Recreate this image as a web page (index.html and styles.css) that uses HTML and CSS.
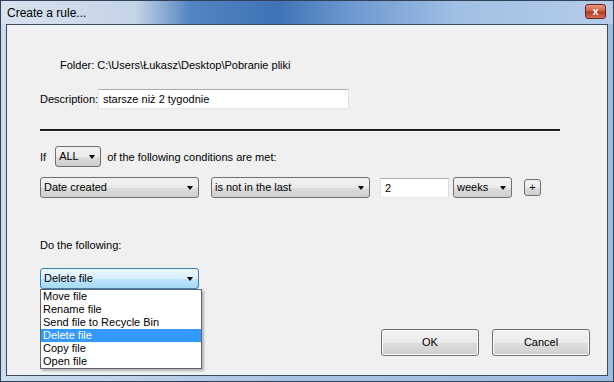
FILE: index.html
```html
<!DOCTYPE html>
<html lang="en">
<head>
  <meta charset="UTF-8">
  <title>Create a rule...</title>
  <link rel="stylesheet" href="styles.css">
</head>
<body>
  <div class="window">
    <div class="titlebar">
      <span class="title">Create a rule...</span>
      <span class="close">x</span>
    </div>

    <div class="client">
      <div class="folder">Folder: C:\Users\Łukasz\Desktop\Pobranie pliki</div>

      <div class="row desc-row">
        <span class="label">Description:</span>
        <div class="textbox desc-box">starsze niż 2 tygodnie</div>
      </div>

      <div class="rule"></div>

      <div class="row if-row">
        <span>If</span>
        <div class="combo combo-all"><span>ALL</span><i class="arrow"></i></div>
        <span>of the following conditions are met:</span>
      </div>

      <div class="row cond-row">
        <div class="combo combo-wide"><span>Date created</span><i class="arrow"></i></div>
        <div class="combo combo-wide second"><span>is not in the last</span><i class="arrow"></i></div>
        <div class="textbox num-box">2</div>
        <div class="combo combo-weeks"><span>weeks</span><i class="arrow"></i></div>
        <div class="plus">+</div>
      </div>

      <div class="do-label">Do the following:</div>

      <div class="action">
        <div class="combo combo-wide focused"><span>Delete file</span><i class="arrow"></i></div>
        <ul class="droplist">
          <li>Move file</li>
          <li>Rename file</li>
          <li>Send file to Recycle Bin</li>
          <li class="selected">Delete file</li>
          <li>Copy file</li>
          <li>Open file</li>
        </ul>
      </div>

      <div class="buttons">
        <div class="btn">OK</div>
        <div class="btn">Cancel</div>
      </div>
    </div>
  </div>
</body>
</html>
```

FILE: styles.css
```css
body {
  margin: 0;
  font-family: 'Liberation Sans', Arial, sans-serif;
  font-size: 11px;
  color: #000;
  background: #a9c4e2;
}

.window {
  width: 614px;
  height: 382px;
  box-sizing: border-box;
  border: 1px solid #2f4259;
  background: linear-gradient(to right, #cddced, #a6c2e2 50%, #9dbde3);
  display: flex;
  flex-direction: column;
}

/* aero title bar with its dark streak */
.titlebar {
  height: 23px;
  padding: 0 5px;
  display: flex;
  align-items: center;
  justify-content: space-between;
  flex-shrink: 0;
  background: linear-gradient(to right, #d8e3ee 0%, #c3d4e7 22%, #5384c2 31%, #3f73b6 45%, #6f9bd1 58%, #a2c0e4 75%, #b5cdea 100%);
}

.title {
  font-size: 12px;
  padding-left: 1px;
}

.close {
  width: 21px;
  height: 15px;
  margin-right: 2px;
  margin-top: -2px;
  border: 1px solid #6e2418;
  border-radius: 3px;
  background: linear-gradient(#e59a85, #d0604a 45%, #b8371f 55%, #d3705a);
  color: #fff;
  font-weight: bold;
  font-size: 11px;
  line-height: 13px;
  text-align: center;
  box-sizing: border-box;
}

.client {
  flex: 1;
  margin: 0 5px 5px 5px;
  background: #f0f0f0;
  border: 1px solid #3c4b5c;
  padding-left: 33px;
  display: flex;
  flex-direction: column;
}

.row {
  display: flex;
  align-items: center;
}

.folder {
  margin-top: 32px;
  height: 16px;
  line-height: 16px;
  padding-left: 20px;
}

.desc-row {
  margin-top: 15px;
  height: 21px;
}

.label {
  width: 58px;
}

.textbox {
  background: #fff;
  border: 1px solid #abadb3;
  border-left-color: #e2e3ea;
  border-right-color: #dbdfe6;
  border-bottom-color: #e3e9ef;
  box-sizing: border-box;
  height: 20px;
  line-height: 18px;
  padding-left: 4px;
}

.desc-box {
  width: 251px;
}

.rule {
  margin-top: 20px;
  width: 520px;
  height: 2px;
  background: #1c1c1c;
  border-bottom: 1px solid #fff;
}

.if-row {
  margin-top: 14px;
  height: 21px;
}

.combo {
  position: relative;
  height: 21px;
  box-sizing: border-box;
  border: 1px solid #707070;
  border-radius: 3px;
  background: linear-gradient(#f2f2f2, #ebebeb 50%, #dddddd 51%, #cfcfcf);
  line-height: 19px;
  padding-left: 3px;
}

.combo .arrow {
  position: absolute;
  right: 5px;
  top: 8px;
  width: 0;
  height: 0;
  border-left: 3px solid transparent;
  border-right: 3px solid transparent;
  border-top: 4px solid #000;
}

.combo-all {
  width: 46px;
  margin: 0 6px 0 9px;
}

.cond-row {
  margin-top: 10px;
  height: 21px;
}

.combo-wide {
  width: 159px;
}

.second {
  margin-left: 12px;
}

.num-box {
  width: 69px;
  margin-left: 10px;
}

.combo-weeks {
  width: 59px;
  margin-left: 4px;
}

.plus {
  width: 17px;
  height: 17px;
  margin-left: 12px;
  box-sizing: border-box;
  border: 1px solid #707070;
  border-radius: 3px;
  background: linear-gradient(#f2f2f2, #ebebeb 50%, #dddddd 51%, #cfcfcf);
  text-align: center;
  line-height: 14px;
}

.do-label {
  margin-top: 39px;
  height: 16px;
  line-height: 16px;
}

.action {
  position: relative;
  margin-top: 15px;
  height: 21px;
}

.focused {
  border-color: #3c7fb1;
  background: linear-gradient(#eaf6fd, #d9f0fc 50%, #bee6fd 51%, #a7d9f5);
}

.droplist {
  position: absolute;
  left: 0;
  top: 21px;
  width: 160px;
  margin: 0;
  padding: 0;
  list-style: none;
  background: #fff;
  border: 1px solid #646464;
  box-shadow: 2px 2px 2px rgba(0, 0, 0, 0.25);
  z-index: 2;
}

.droplist li {
  height: 13px;
  line-height: 13px;
  padding-left: 2px;
}

.droplist .selected {
  background: #3399ff;
  color: #fff;
}

.buttons {
  margin-top: 40px;
  display: flex;
  justify-content: flex-end;
  gap: 13px;
  padding-right: 17px;
}

.btn {
  width: 98px;
  height: 27px;
  box-sizing: border-box;
  border: 1px solid #707070;
  border-radius: 3px;
  background: linear-gradient(#f2f2f2, #ebebeb 50%, #dddddd 51%, #cfcfcf);
  box-shadow: inset 0 0 0 1px #fcfcfc;
  text-align: center;
  line-height: 25px;
}
```
